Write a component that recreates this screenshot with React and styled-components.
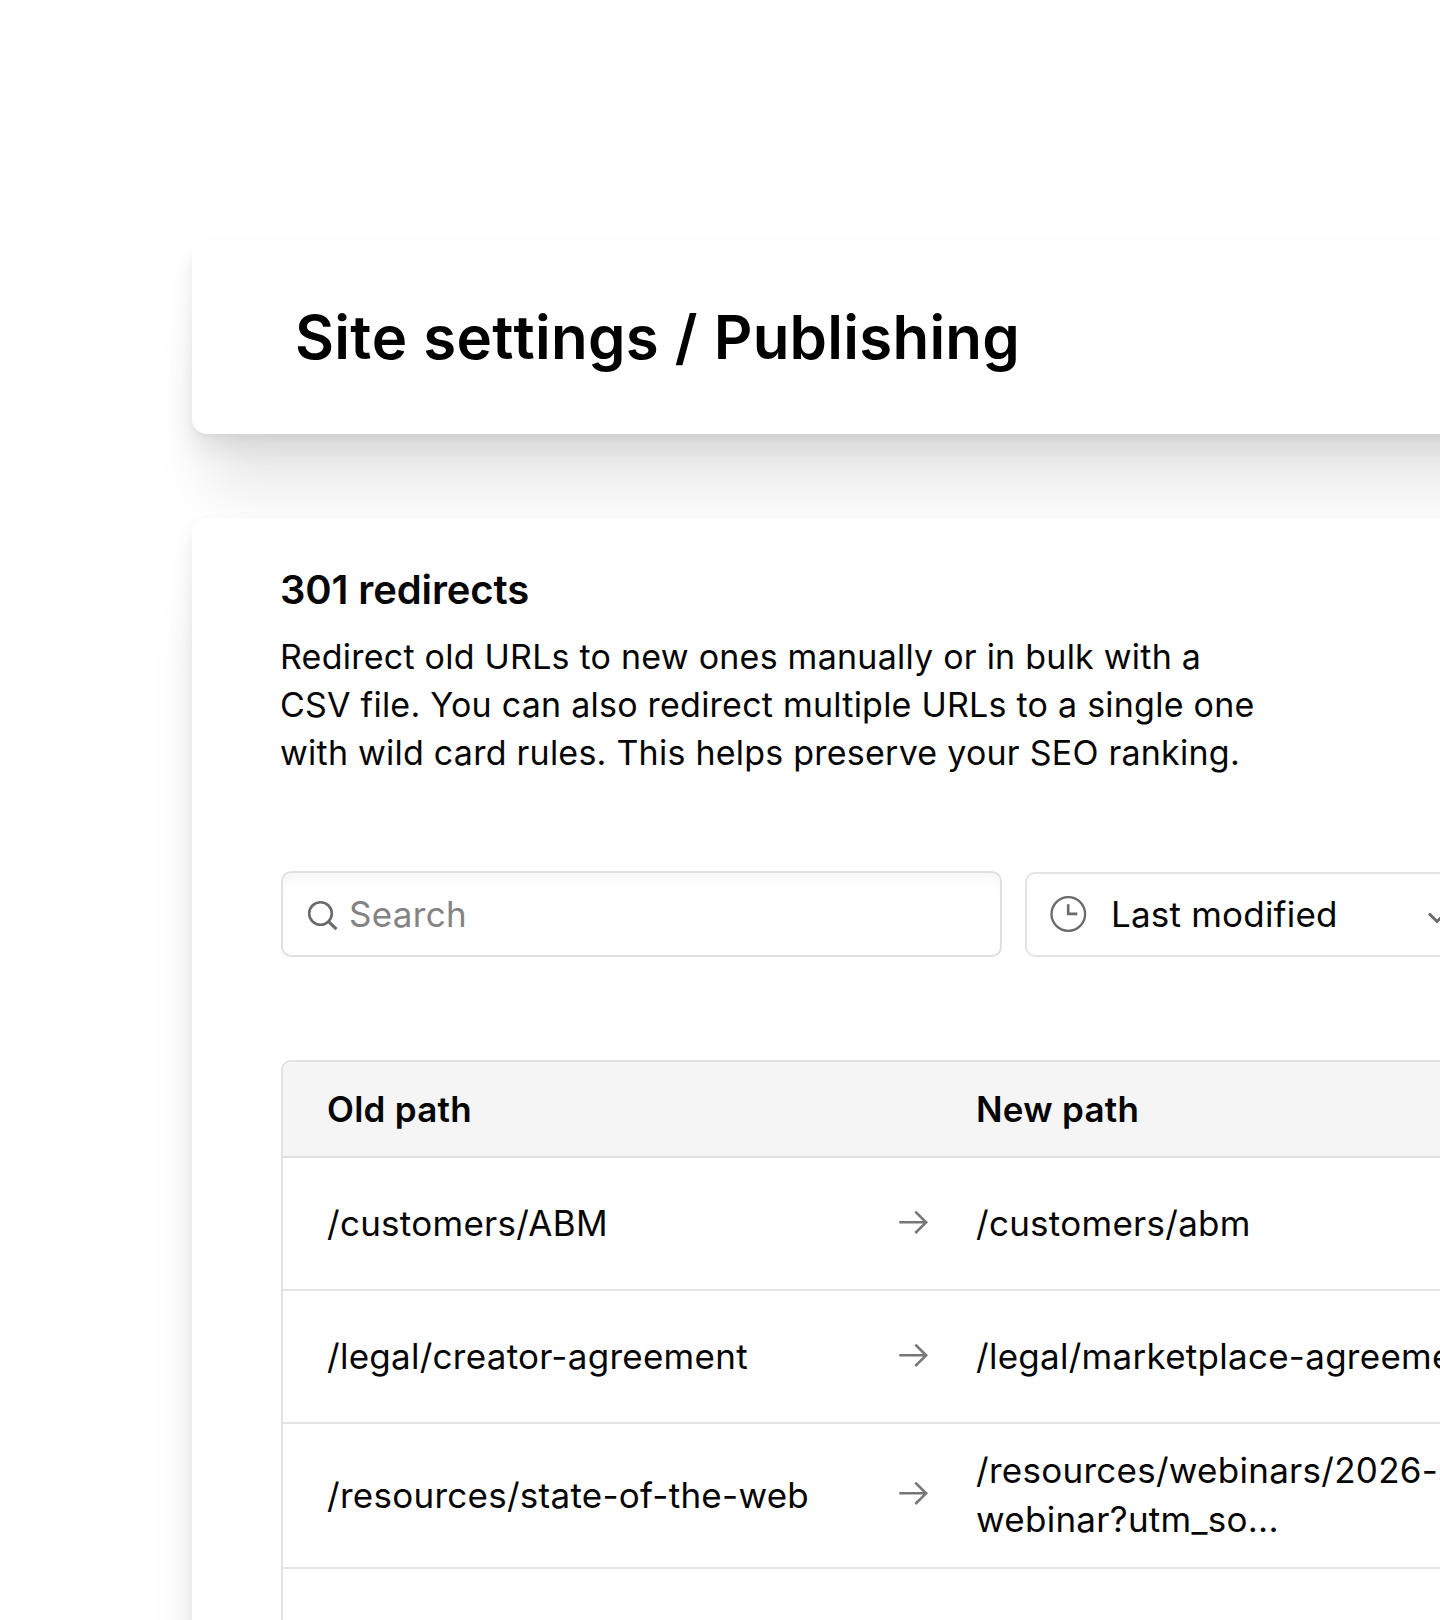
import React from "react";
import styled, { createGlobalStyle } from "styled-components";

const GlobalStyle = createGlobalStyle`
  * {
    box-sizing: border-box;
  }

  body {
    margin: 0;
    background: #fff;
    color: #060606;
    font-family: Inter, "Liberation Sans", sans-serif;
    overflow: hidden;
  }
`;

const redirects = [
  { from: "/customers/ABM", to: ["/customers/abm"] },
  { from: "/legal/creator-agreement", to: ["/legal/marketplace-agreement"] },
  {
    from: "/resources/state-of-the-web",
    to: ["/resources/webinars/2026-state-", "webinar?utm_so..."],
    height: 144.5,
  },
  { from: "", to: [] },
];

const Page = styled.div`
  display: flex;
  flex-direction: column;
  gap: 84px;
  height: 1620px;
  padding: 240px 0 0 192px;
  overflow: hidden;
`;

const Card = styled.section`
  flex-shrink: 0;
  width: 1400px;
  border-radius: 15px;
  background: #fff;
  box-shadow:
    0 4px 8px rgba(0, 0, 0, 0.04),
    0 16px 26px rgba(0, 0, 0, 0.08),
    0 72px 60px -16px rgba(0, 0, 0, 0.09);
`;

const TitleCard = styled(Card)`
  display: flex;
  align-items: center;
  height: 194px;
  padding-left: 103px;
`;

const Title = styled.h1`
  margin: 0;
  font-size: 60px;
  font-weight: 600;
  font-kerning: none;
  line-height: 74px;
  letter-spacing: 0.25px;
  word-spacing: 0.5px;
  color: #000;
`;

const SettingsCard = styled(Card)`
  height: 1300px;
  padding: 48px 0 0 89px;
`;

const Heading = styled.h2`
  margin: 0 0 19px -1px;
  font-size: 40px;
  font-weight: 600;
  line-height: 48px;
  letter-spacing: -0.12px;
`;

const Description = styled.p`
  width: 1000px;
  margin: 0 0 94px -1px;
  font-size: 34px;
  line-height: 48px;
  letter-spacing: 0.235px;
`;

const Toolbar = styled.div`
  display: flex;
  align-items: flex-end;
  gap: 23px;
  margin-bottom: 103px;
`;

const Field = styled.div`
  display: flex;
  align-items: center;
  height: 86px;
  border: 2px solid #e4e4e4;
  border-radius: 10px;
  font-size: 35px;
  letter-spacing: 0.3px;
  white-space: nowrap;

  svg {
    flex-shrink: 0;
  }
`;

const SearchField = styled(Field)`
  gap: 10px;
  width: 721px;
  padding-left: 24px;
  border-color: #e0e0e0;
  color: #848484;
  box-shadow: inset 0 14px 14px -8px rgba(0, 0, 0, 0.04);
`;

const SortSelect = styled(Field)`
  width: 460px;
  height: 85px;
  padding: 0 0 1px 22px;
  letter-spacing: 0.2px;

  span {
    width: 314px;
    margin-left: 24px;
  }
`;

const Table = styled.div`
  width: 1240px;
  border: 2px solid #e2e2e2;
  border-radius: 10px;
  overflow: hidden;
  font-size: 35px;
  line-height: 49px;
  letter-spacing: 0.27px;
  white-space: nowrap;
`;

const Row = styled.div`
  display: grid;
  grid-template-columns: 571px 78px 1fr;
  align-items: center;
  height: ${(props) => props.$height || 133}px;
  padding-left: 44px;
  border-bottom: 2px solid #e4e4e4;
`;

const HeaderRow = styled(Row)`
  height: 96px;
  background: #f5f5f5;
  border-color: #e0e0e0;
  font-weight: 600;
`;

const Line = styled.div``;

const SearchIcon = () => (
  <svg width="32" height="32" viewBox="0 0 32 32" fill="none" stroke="#6a6a6a">
    <circle cx="13.5" cy="15.5" r="11.3" strokeWidth="2.6" />
    <path d="M21.6 23.6 29.4 31.2" strokeWidth="3.1" />
  </svg>
);

const ClockIcon = () => (
  <svg width="38" height="38" viewBox="0 0 38 38" fill="none" stroke="#6a6a6a">
    <circle cx="19.3" cy="19" r="16.8" strokeWidth="2.3" />
    <path d="M19.2 9.3v9.6h9.1" strokeWidth="2.6" />
  </svg>
);

const ChevronIcon = () => (
  <svg width="24" height="24" viewBox="0 0 24 24" fill="none" stroke="#6a6a6a">
    <path d="m4 11.5 8 8 8-8" strokeWidth="3" />
  </svg>
);

const ArrowIcon = () => (
  <svg width="32" height="28" viewBox="0 0 32 28" fill="none" stroke="#777">
    <path d="M1.3 12.3h28M17.3 1.6 28.1 12.3 17.3 23" strokeWidth="2.6" />
  </svg>
);

const RedirectTable = () => (
  <Table>
    <HeaderRow>
      <div>Old path</div>
      <div />
      <div>New path</div>
    </HeaderRow>
    {redirects.map((redirect, index) => (
      <Row key={index} $height={redirect.height}>
        <div>{redirect.from}</div>
        {redirect.from ? <ArrowIcon /> : <div />}
        <div>
          {redirect.to.map((line) => (
            <Line key={line}>{line}</Line>
          ))}
        </div>
      </Row>
    ))}
  </Table>
);

const App = () => {
  return (
    <Page>
      <GlobalStyle />
      <TitleCard>
        <Title>Site settings / Publishing</Title>
      </TitleCard>
      <SettingsCard>
        <Heading>301 redirects</Heading>
        <Description>
          Redirect old URLs to new ones manually or in bulk with a
          <br />
          CSV file. You can also redirect multiple URLs to a single one
          <br />
          with wild card rules. This helps preserve your SEO ranking.
        </Description>
        <Toolbar>
          <SearchField>
            <SearchIcon />
            Search
          </SearchField>
          <SortSelect>
            <ClockIcon />
            <span>Last modified</span>
            <ChevronIcon />
          </SortSelect>
        </Toolbar>
        <RedirectTable />
      </SettingsCard>
    </Page>
  );
};

export default App;
